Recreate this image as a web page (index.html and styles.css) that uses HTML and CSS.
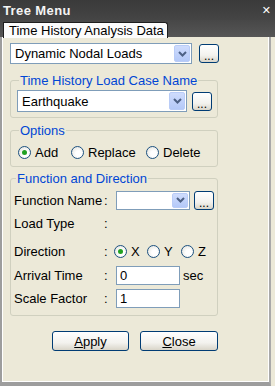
FILE: index.html
```html
<!DOCTYPE html>
<html>
<head>
    <meta charset="UTF-8">
    <title>Tree Menu</title>
    <link rel="stylesheet" href="styles.css">
</head>
<body>
    <div class="window">
        <div class="title-bar">
            <span class="title">Tree Menu</span>
            <span class="close-x">&#x2715;</span>
        </div>
        <div class="tab-bar">
            <div class="tab">Time History Analysis Data</div>
        </div>

        <div class="panel">
            <div class="top-row">
                <div class="combo combo-wide">
                    <span class="combo-text">Dynamic Nodal Loads</span>
                    <span class="combo-arrow"><svg width="9" height="6" viewBox="0 0 9 6"><path d="M1 1 L4.5 4.5 L8 1" fill="none" stroke="#4d6185" stroke-width="2"/></svg></span>
                </div>
                <button class="dots">...</button>
            </div>

            <fieldset class="group group-case">
                <legend>Time History Load Case Name</legend>
                <div class="field-row">
                    <div class="combo combo-case">
                        <span class="combo-text">Earthquake</span>
                        <span class="combo-arrow"><svg width="9" height="6" viewBox="0 0 9 6"><path d="M1 1 L4.5 4.5 L8 1" fill="none" stroke="#4d6185" stroke-width="2"/></svg></span>
                    </div>
                    <button class="dots">...</button>
                </div>
            </fieldset>

            <fieldset class="group group-options">
                <legend>Options</legend>
                <div class="radio-row">
                    <span class="radio-item opt-add"><span class="radio checked"></span>Add</span>
                    <span class="radio-item opt-replace"><span class="radio"></span>Replace</span>
                    <span class="radio-item"><span class="radio"></span>Delete</span>
                </div>
            </fieldset>

            <fieldset class="group group-func">
                <legend>Function and Direction</legend>
                <div class="form-row row-func">
                    <span class="label">Function Name</span>
                    <span class="colon">:</span>
                    <div class="combo combo-func">
                        <span class="combo-text"></span>
                        <span class="combo-arrow"><svg width="9" height="6" viewBox="0 0 9 6"><path d="M1 1 L4.5 4.5 L8 1" fill="none" stroke="#4d6185" stroke-width="2"/></svg></span>
                    </div>
                    <button class="dots">...</button>
                </div>
                <div class="form-row row-type">
                    <span class="label">Load Type</span>
                    <span class="colon">:</span>
                </div>
                <div class="form-row row-dir">
                    <span class="label">Direction</span>
                    <span class="colon">:</span>
                    <span class="radio-item dir-x"><span class="radio checked"></span>X</span>
                    <span class="radio-item dir-y"><span class="radio"></span>Y</span>
                    <span class="radio-item"><span class="radio"></span>Z</span>
                </div>
                <div class="form-row row-time">
                    <span class="label">Arrival Time</span>
                    <span class="colon">:</span>
                    <div class="text-box">0</div>
                    <span class="unit">sec</span>
                </div>
                <div class="form-row row-scale">
                    <span class="label">Scale Factor</span>
                    <span class="colon">:</span>
                    <div class="text-box">1</div>
                </div>
            </fieldset>

            <div class="button-row">
                <button class="push"><u>A</u>pply</button>
                <button class="push push-close"><u>C</u>lose</button>
            </div>
        </div>
    </div>
</body>
</html>
```

FILE: styles.css
```css
* {
    box-sizing: border-box;
}
body {
    margin: 0;
    background-color: #ece9d8;
    font-family: "Liberation Sans", Arial, sans-serif;
    font-size: 13px;
    color: #000;
}
.window {
    width: 275px;
    height: 386px;
    display: flex;
    flex-direction: column;
    background-color: #ece9d8;
}
.title-bar {
    height: 20px;
    background: linear-gradient(#3a3a3a, #454545);
    display: flex;
    align-items: center;
    justify-content: space-between;
    padding: 0 4px 0 3px;
}
.title {
    color: #f4f4f4;
    font-weight: bold;
    font-size: 13px;
    letter-spacing: 0.4px;
}
.close-x {
    color: #fff;
    font-size: 11px;
    font-weight: bold;
    font-family: "DejaVu Sans", sans-serif;
}
.tab-bar {
    height: 17px;
    background: linear-gradient(#474747, #565656);
    padding: 2px 0 0 3px;
    display: flex;
    align-items: flex-end;
}
.tab {
    width: 165px;
    height: 16px;
    margin-bottom: -1px;
    background-color: #fcfcfc;
    border: 1px solid #1e1e1e;
    border-bottom: none;
    border-radius: 0 3px 0 0;
    padding: 0 0 0 5px;
    line-height: 15px;
    font-size: 13px;
}
.panel {
    flex: 1;
    border-left: 2px solid #9d9d9d;
    border-right: 2px solid #a9a9a9;
    border-bottom: 4px solid #9d9d9d;
    margin-right: 4px;
    box-shadow: inset 1px 0 0 #fff, inset -1px -1px 0 #fff;
    padding: 6px 0 0 8px;
}
.top-row {
    display: flex;
    align-items: center;
    height: 21px;
}
.combo {
    height: 21px;
    background-color: #fff;
    border: 1px solid #7f9db9;
    display: flex;
    align-items: center;
    padding: 1px;
}
.combo-text {
    flex: 1;
    padding-left: 3px;
}
.combo-arrow {
    width: 16px;
    height: 100%;
    background: linear-gradient(#cfdcfd, #b4c9f8);
    border: 1px solid #b9ccf7;
    border-radius: 2px;
    display: flex;
    align-items: center;
    justify-content: center;
}
.combo-wide {
    width: 182px;
}
.dots {
    width: 20px;
    height: 19px;
    margin-left: 7px;
    border: 1px solid #003c74;
    border-radius: 3px;
    background: linear-gradient(#ffffff, #f3f2ee 60%, #d9d5c9);
    font-family: "Liberation Sans", Arial, sans-serif;
    font-size: 12px;
    padding: 0;
    line-height: 22px;
    color: #000;
}
.group {
    width: 208px;
    margin: 0;
    border: 1px solid #d0d0bf;
    border-radius: 3px;
    padding: 0 0 0 6px;
}
.group legend {
    color: #0046d5;
    padding: 0 1px;
    margin-left: 2px;
    line-height: 15px;
}
.group-case {
    margin-top: 9px;
    height: 45px;
    padding-top: 2px;
}
.field-row {
    display: flex;
    align-items: center;
}
.combo-case {
    width: 170px;
    height: 22px;
}
.combo-case + .dots {
    margin-left: 5px;
}
.group-options {
    margin-top: 5px;
    height: 44px;
    padding-top: 7px;
}
.radio-row {
    display: flex;
    align-items: center;
    height: 15px;
}
.radio-item {
    display: flex;
    align-items: center;
}
.radio {
    width: 13px;
    height: 13px;
    border: 1px solid #1c5180;
    border-radius: 50%;
    background: radial-gradient(circle at 60% 60%, #ffffff 30%, #e2e2dc 90%);
    margin-right: 4px;
    display: flex;
    align-items: center;
    justify-content: center;
}
.radio.checked::after {
    content: "";
    width: 5px;
    height: 5px;
    border-radius: 50%;
    background-color: #21a121;
}
.opt-add {
    width: 54px;
    padding-left: 1px;
}
.opt-replace {
    width: 75px;
}
.group-func {
    margin-top: 4px;
    height: 145px;
    padding: 4px 0 0 3px;
}
.form-row {
    display: flex;
    align-items: center;
    height: 20px;
}
.label {
    width: 90px;
}
.colon {
    width: 12px;
}
.combo-func {
    width: 74px;
    height: 19px;
}
.combo-func + .dots {
    margin-left: 4px;
}
.row-type {
    margin-top: 3px;
}
.row-dir {
    margin-top: 8px;
}
.row-dir .radio-item {
    width: 34px;
}
.row-dir .dir-x {
    margin-left: -2px;
    width: 33px;
}
.row-time {
    margin-top: 4px;
}
.row-scale {
    margin-top: 3px;
}
.text-box {
    width: 64px;
    height: 19px;
    border: 1px solid #7f9db9;
    background-color: #fff;
    padding-left: 3px;
    line-height: 17px;
}
.unit {
    margin-left: 3px;
}
.button-row {
    display: flex;
    margin-top: 15px;
    padding-left: 42px;
}
.push {
    width: 77px;
    height: 20px;
    border: 1px solid #003c74;
    border-radius: 3px;
    background: linear-gradient(#ffffff, #f3f2ee 60%, #d9d5c9);
    font-family: "Liberation Sans", Arial, sans-serif;
    font-size: 13px;
    padding: 0;
    color: #000;
}
.push-close {
    margin-left: 11px;
    width: 78px;
}
```
